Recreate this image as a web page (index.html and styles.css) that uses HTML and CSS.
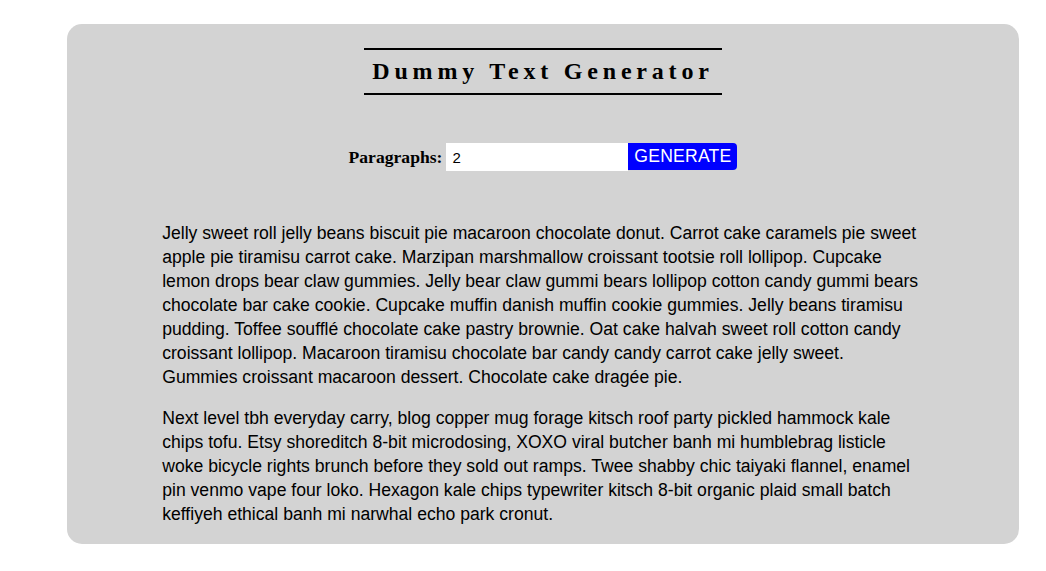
FILE: index.html
```html
<!DOCTYPE html>
<html>
<head>
<meta charset="utf-8">
<title>Dummy Text Generator</title>
<link rel="stylesheet" href="styles.css">
</head>
<body>
<div class="container">
  <div class="title-wrap">
    <h1 class="title">Dummy Text Generator</h1>
  </div>
  <form class="form">
    <label class="label" for="amount">Paragraphs:</label>
    <input class="input" id="amount" type="number" value="2">
    <button class="btn" type="button">GENERATE</button>
  </form>
  <div class="text">
    <p>Jelly sweet roll jelly beans biscuit pie macaroon chocolate donut. Carrot cake caramels pie sweet apple pie tiramisu carrot cake. Marzipan marshmallow croissant tootsie roll lollipop. Cupcake lemon drops bear claw gummies. Jelly bear claw gummi bears lollipop cotton candy gummi bears chocolate bar cake cookie. Cupcake muffin danish muffin cookie gummies. Jelly beans tiramisu pudding. Toffee soufflé chocolate cake pastry brownie. Oat cake halvah sweet roll cotton candy croissant lollipop. Macaroon tiramisu chocolate bar candy candy carrot cake jelly sweet. Gummies croissant macaroon dessert. Chocolate cake dragée pie.</p>
    <p>Next level tbh everyday carry, blog copper mug forage kitsch roof party pickled hammock kale chips tofu. Etsy shoreditch 8-bit microdosing, XOXO viral butcher banh mi humblebrag listicle woke bicycle rights brunch before they sold out ramps. Twee shabby chic taiyaki flannel, enamel pin venmo vape four loko. Hexagon kale chips typewriter kitsch 8-bit organic plaid small batch keffiyeh ethical banh mi narwhal echo park cronut.</p>
  </div>
</div>
</body>
</html>
```

FILE: styles.css
```css
html, body {
  margin: 0;
  padding: 0;
  background: #ffffff;
}

.container {
  box-sizing: border-box;
  width: 952px;
  margin: 24px 0 0 67px;
  padding: 24px 0 18px;
  background: #d3d3d3;
  border-radius: 15px;
}

.title-wrap {
  display: flex;
  justify-content: center;
}

.title {
  margin: 0;
  box-sizing: border-box;
  width: 358px;
  height: 47px;
  border-top: 2px solid #000;
  border-bottom: 2px solid #000;
  font-family: "Liberation Serif", "Times New Roman", serif;
  font-weight: bold;
  font-size: 24px;
  letter-spacing: 4.8px;
  line-height: 43px;
  text-align: center;
  color: #000;
  padding-left: 0;
}

.form {
  display: flex;
  justify-content: center;
  align-items: center;
  margin-top: 48px;
  padding-left: 0;
}

.label {
  font-family: "Liberation Serif", "Times New Roman", serif;
  font-weight: bold;
  font-size: 17.6px;
  margin-right: 4px;
}

.input {
  box-sizing: border-box;
  width: 182px;
  height: 28px;
  border: none;
  outline: none;
  padding: 0 6px;
  font-family: "Liberation Sans", Arial, sans-serif;
  font-size: 15px;
  background: #fff;
  color: #000;
  -moz-appearance: textfield;
}
.input::-webkit-inner-spin-button,
.input::-webkit-outer-spin-button {
  -webkit-appearance: none;
  margin: 0;
}

.btn {
  box-sizing: border-box;
  width: 109px;
  height: 27px;
  margin-bottom: 1px;
  border: none;
  border-radius: 0 4px 4px 0;
  background: #0000ff;
  color: #fff;
  font-family: "Liberation Sans", Arial, sans-serif;
  font-size: 17.6px;
  letter-spacing: 0.2px;
  padding: 0;
}

.text {
  width: 80%;
  margin: 50px auto 0;
}

.text p {
  margin: 0 0 17px;
  font-family: "Liberation Sans", Arial, sans-serif;
  font-size: 17.6px;
  line-height: 24px;
  color: #000;
}

.text p:last-child {
  margin-bottom: 0;
}
```
